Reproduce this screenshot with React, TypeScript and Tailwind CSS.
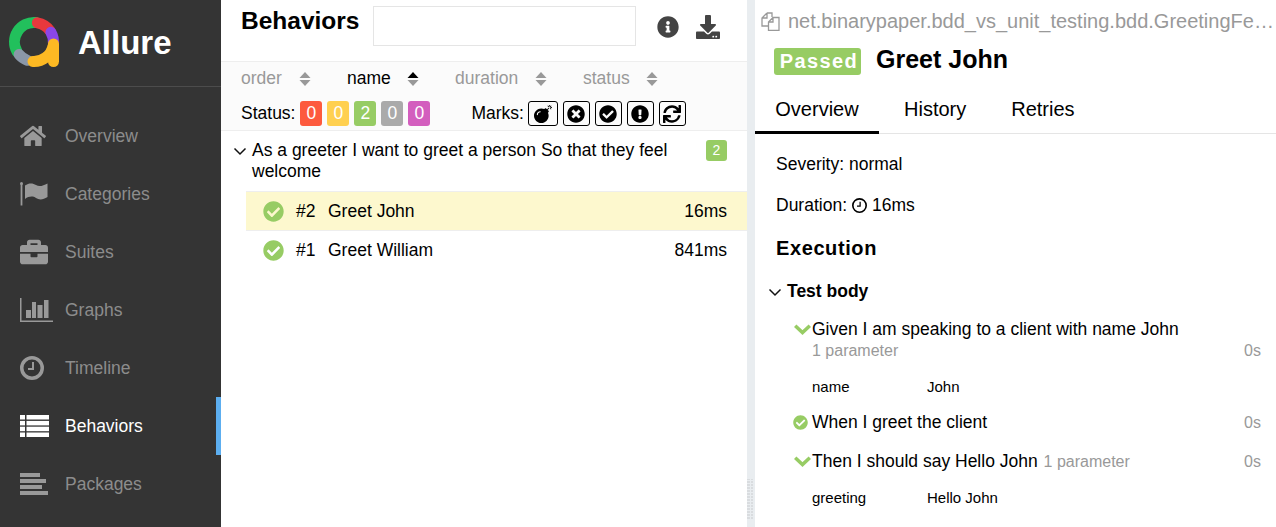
import {
  FaHome,
  FaBriefcase,
  FaInfoCircle,
  FaDownload,
  FaBomb,
  FaTimesCircle,
  FaCheckCircle,
  FaExclamationCircle,
  FaSync,
} from 'react-icons/fa'

function FlagIcon() {
  return (
    <svg width="28" height="24" viewBox="0 0 28 24" fill="#999">
      <path d="M1.5 2V23.5" stroke="#999" strokeWidth="1.8" />
      <circle cx="1.5" cy="1.6" r="1.5" />
      <path d="M5 3.5C9 0.5 13 1 16 3C19 5 23 4 27.5 1.5V15C23 18 19 18 16 16C13 14 9 14 5 17Z" />
    </svg>
  )
}

function ChartIcon() {
  return (
    <svg width="33" height="24" viewBox="0 0 33 24" fill="#999">
      <path d="M0.75 0V23.25H33" fill="none" stroke="#999" strokeWidth="1.5" />
      <rect x="6" y="12" width="5" height="8" />
      <rect x="12" y="4" width="4" height="16" />
      <rect x="17.5" y="7" width="5" height="13" />
      <rect x="24" y="2" width="4.5" height="18" />
    </svg>
  )
}

function ClockIcon({ size, weight, color }: { size: number; weight: number; color: string }) {
  return (
    <svg width={size} height={size} viewBox="0 0 24 24" fill="none" stroke={color} strokeWidth={weight}>
      <circle cx="12" cy="12" r={12 - weight / 2} />
      <path d="M13 6V13H8" strokeWidth="2" />
    </svg>
  )
}

function ListIcon() {
  return (
    <svg width="29" height="22" viewBox="0 0 29 22" fill="#fff">
      {[0, 5.9, 11.7, 17.5].map(y => (
        <g key={y}>
          <rect x="0" y={y} width="5" height="4.5" />
          <rect x="6.5" y={y} width="22.5" height="4.5" />
        </g>
      ))}
    </svg>
  )
}

function PackagesIcon() {
  return (
    <svg width="29" height="22" viewBox="0 0 29 22" fill="#999">
      <rect x="0" y="0" width="20" height="4" />
      <rect x="0" y="6" width="26" height="4" />
      <rect x="0" y="12" width="22" height="4" />
      <rect x="0" y="18" width="28" height="4" />
    </svg>
  )
}

const navItems = [
  { label: 'Overview', icon: <FaHome className="text-[26px] text-[#999]" /> },
  { label: 'Categories', icon: <FlagIcon /> },
  { label: 'Suites', icon: <FaBriefcase className="text-[28px] text-[#999]" /> },
  { label: 'Graphs', icon: <ChartIcon /> },
  { label: 'Timeline', icon: <ClockIcon size={24} weight={3.5} color="#999" /> },
  { label: 'Behaviors', icon: <ListIcon />, active: true },
  { label: 'Packages', icon: <PackagesIcon /> },
]

function Logo() {
  return (
    <svg width="70" height="86" viewBox="0 0 70 86" fill="none" strokeWidth="11" strokeLinecap="round" className="shrink-0">
      <path d="M17.1 51.75A19.5 19.5 0 0 1 35.7 22.6" stroke="#22c05c" />
      <path d="M19.1 54.5A19.5 19.5 0 0 0 27.3 60.3" stroke="#8a97a8" />
      <path d="M37.4 22.8A19.5 19.5 0 0 1 50 30.8" stroke="#e8383d" />
      <path d="M50.9 32.3A19.5 19.5 0 0 1 53.4 43.7" stroke="#8b46e8" />
      <path d="M33 61.5A19.5 19.5 0 0 0 53 46" stroke="#fdb923" />
      <path d="M53.5 44V61.5" stroke="#fdb923" />
    </svg>
  )
}

function Chevron() {
  return (
    <svg width="14" height="14" viewBox="0 0 14 14" fill="none" stroke="#111" strokeWidth="1.5" className="shrink-0">
      <path d="M1.5 4.5L7 10L12.5 4.5" />
    </svg>
  )
}

function StepChevron() {
  return (
    <svg width="17" height="11" viewBox="0 0 17 11" fill="none" stroke="#97cc64" strokeWidth="3.5" className="absolute top-[5px] -left-[18px]">
      <path d="M1.2 1.8L8.5 8.5L15.8 1.8" />
    </svg>
  )
}

function CopyIcon() {
  return (
    <svg width="19" height="19" viewBox="0 0 19 19" fill="none" stroke="#999" strokeWidth="1.3" className="shrink-0">
      <path d="M6 1H11V5M6 1L1 6V14H7M6 1V6H1" />
      <path d="M12 5.5H18V18.3H7.5V10ZM12 5.5V10H7.5" />
    </svg>
  )
}

function SortIcon({ active }: { active?: boolean }) {
  return (
    <svg width="12" height="16" viewBox="0 0 12 16" className="shrink-0">
      <path d="M6 1L11.5 7H0.5Z" fill={active ? '#000' : '#999'} />
      <path d="M6 15L11.5 9H0.5Z" fill="#999" />
    </svg>
  )
}

function SortItem({ label, width, active }: { label: string; width: string; active?: boolean }) {
  return (
    <div className={`flex items-center justify-between ${width}`}>
      <span className={active ? 'text-black' : 'text-[#999]'}>{label}</span>
      <SortIcon active={active} />
    </div>
  )
}

function Count({ value, color }: { value: number; color: string }) {
  return (
    <span className={`flex h-[25px] w-[22px] items-center justify-center rounded-[3px] text-white ${color}`}>
      {value}
    </span>
  )
}

function Mark({ children, width }: { children: React.ReactNode; width: string }) {
  return (
    <span className={`flex h-[25px] items-center justify-center rounded-[3px] border border-black text-[18px] text-black ${width}`}>
      {children}
    </span>
  )
}

function TestRow({ order, name, time, selected }: { order: string; name: string; time: string; selected?: boolean }) {
  return (
    <div
      className={`ml-[25px] flex h-[40px] items-center border-b pr-5 pl-[17px] ${
        selected ? 'border-[#eeeeee] border-t bg-[#fdf8ce]' : 'border-transparent'
      }`}
    >
      <FaCheckCircle className="shrink-0 text-[21px] text-[#97cc64]" />
      <span className="ml-[12px] w-[32px]">{order}</span>
      <span className="flex-1">{name}</span>
      <span>{time}</span>
    </div>
  )
}

function Param({ name, value }: { name: string; value: string }) {
  return (
    <div className="flex text-[15px] leading-[20px]">
      <span className="w-[115px]">{name}</span>
      <span>{value}</span>
    </div>
  )
}

export default function App() {
  return (
    <div className="flex h-[527px] w-[1276px] overflow-hidden bg-white font-['Liberation_Sans',Arial,sans-serif] text-[17.5px] leading-[21px] text-black">
      {/* sidebar */}
      <aside className="w-[221px] shrink-0 bg-[#343434]">
        <div className="flex h-[87px] items-center border-b border-[#4c4c4c]">
          <Logo />
          <span className="mb-[2px] ml-2 text-[33px] font-bold text-white">Allure</span>
        </div>
        <nav className="pt-[20px]">
          {navItems.map(item => (
            <div
              key={item.label}
              className={`flex h-[58px] items-center pl-[20px] ${
                item.active ? 'border-r-[5px] border-[#5caef0] text-white' : 'text-[#8c8c8c]'
              }`}
            >
              <span className="flex w-[45px] items-center">{item.icon}</span>
              {item.label}
            </div>
          ))}
        </nav>
      </aside>

      {/* tree pane */}
      <section className="w-[526px] shrink-0">
        <div className="flex h-[62px] items-start border-b border-[#eeeeee] pt-[6px] pl-5">
          <h2 className="w-[132px] pt-[2px] text-[24.5px] leading-[26px] font-bold">Behaviors</h2>
          <div className="h-[40px] w-[263px] border border-[#e5e5e5]" />
          <FaInfoCircle className="mt-[10px] ml-[21px] text-[22px] text-[#444]" />
          <FaDownload className="mt-[9px] ml-[17px] text-[24px] text-[#444]" />
        </div>
        <div className="h-[69px] border-b border-[#eeeeee] bg-[#fbfbfb] pt-[6px] pl-5">
          <div className="flex h-[21px] items-center">
            <SortItem label="order" width="w-[70px]" />
            <SortItem label="name" width="w-[72px] ml-[36px]" active />
            <SortItem label="duration" width="w-[92px] ml-[36px]" />
            <SortItem label="status" width="w-[75px] ml-[36px]" />
          </div>
          <div className="mt-[12px] flex items-center">
            <span>Status:</span>
            <span className="ml-[5px] flex gap-[5px]">
              <Count value={0} color="bg-[#fd5a3e]" />
              <Count value={0} color="bg-[#ffd050]" />
              <Count value={2} color="bg-[#97cc64]" />
              <Count value={0} color="bg-[#aaaaaa]" />
              <Count value={0} color="bg-[#d35ebe]" />
            </span>
            <span className="ml-[41px]">Marks:</span>
            <span className="ml-[4px] flex gap-[5px]">
              <Mark width="w-[30px]"><FaBomb /></Mark>
              <Mark width="w-[27px]"><FaTimesCircle /></Mark>
              <Mark width="w-[27px]"><FaCheckCircle /></Mark>
              <Mark width="w-[27px]"><FaExclamationCircle /></Mark>
              <Mark width="w-[27px]"><FaSync /></Mark>
            </span>
          </div>
        </div>
        <div className="flex pt-[9px] pr-5 pb-[9px] pl-[12px]">
          <span className="mt-[4px]"><Chevron /></span>
          <p className="ml-[5px] w-[430px]">As a greeter I want to greet a person So that they feel welcome</p>
          <span className="ml-auto flex h-[21px] w-[21px] items-center justify-center rounded-[3px] bg-[#97cc64] text-[14px] text-white">
            2
          </span>
        </div>
        <TestRow order="#2" name="Greet John" time="16ms" selected />
        <TestRow order="#1" name="Greet William" time="841ms" />
      </section>

      {/* resize gutter */}
      <div className="flex w-[8px] shrink-0 items-end bg-[#e9edf0] pb-[8px]">
        <div className="h-[40px] w-[6px] bg-[linear-gradient(90deg,transparent_3px,#e9edf0_3px,#e9edf0_4px,transparent_4px),repeating-linear-gradient(0deg,#d9dcdf_0px,#d9dcdf_2px,transparent_2px,transparent_3px)]" />
      </div>

      {/* test result pane */}
      <section className="min-w-0 flex-1">
        <div className="flex items-center pt-[10px] pl-[6px] text-[#999]">
          <CopyIcon />
          <span className="ml-[8px] text-[20px] leading-[22px] whitespace-nowrap">
            net.binarypaper.bdd_vs_unit_testing.bdd.GreetingFe…
          </span>
        </div>
        <div className="mt-[16px] flex items-start pl-[19px]">
          <span className="flex h-[27px] w-[87px] items-center justify-center rounded-[3px] bg-[#97cc64] pl-[3px] text-[20px] font-bold tracking-[1.4px] text-white">
            Passed
          </span>
          <h2 className="ml-[15px] text-[25px] leading-[22px] font-bold">Greet John</h2>
        </div>
        <div className="mt-[12px] flex h-[47px] border-b border-[#e5e5e5] text-[20px]">
          <span className="flex h-[47px] w-[124px] items-center justify-center border-b-[3px] border-black pt-[1px]">Overview</span>
          <span className="ml-[25px] flex h-[44px] items-center pt-[1px]">History</span>
          <span className="ml-[45px] flex h-[44px] items-center pt-[1px]">Retries</span>
        </div>
        <div className="pt-[20px] pr-[15px] pl-[21px]">
          <p>Severity: normal</p>
          <p className="mt-[20px] flex items-center">
            Duration:
            <span className="mx-[5px]"><ClockIcon size={15} weight={2.6} color="#000" /></span>
            16ms
          </p>
          <h3 className="mt-[20px] text-[20px] leading-[24px] font-bold tracking-[0.6px]">Execution</h3>
          <div className="mt-[21px] -ml-[8px] flex items-center font-bold">
            <Chevron />
            <span className="ml-[5px]">Test body</span>
          </div>
          <div className="mt-[17px] pl-[36px]">
            <div className="relative flex justify-between">
              <StepChevron />
              <div>
                <div>Given I am speaking to a client with name John</div>
                <div className="text-[16px] text-[#999]">1 parameter</div>
              </div>
              <span className="self-end text-[16px] text-[#999]">0s</span>
            </div>
            <div className="mt-[16px]"><Param name="name" value="John" /></div>
            <div className="relative mt-[15px] flex justify-between">
              <FaCheckCircle className="absolute top-[3px] -left-[19px] text-[15px] text-[#97cc64]" />
              <span>When I greet the client</span>
              <span className="text-[16px] text-[#999]">0s</span>
            </div>
            <div className="relative mt-[18px] flex justify-between">
              <StepChevron />
              <span>
                Then I should say Hello John <span className="ml-[1px] text-[16px] text-[#999]">1 parameter</span>
              </span>
              <span className="text-[16px] text-[#999]">0s</span>
            </div>
            <div className="mt-[16px]"><Param name="greeting" value="Hello John" /></div>
          </div>
        </div>
      </section>
    </div>
  )
}
